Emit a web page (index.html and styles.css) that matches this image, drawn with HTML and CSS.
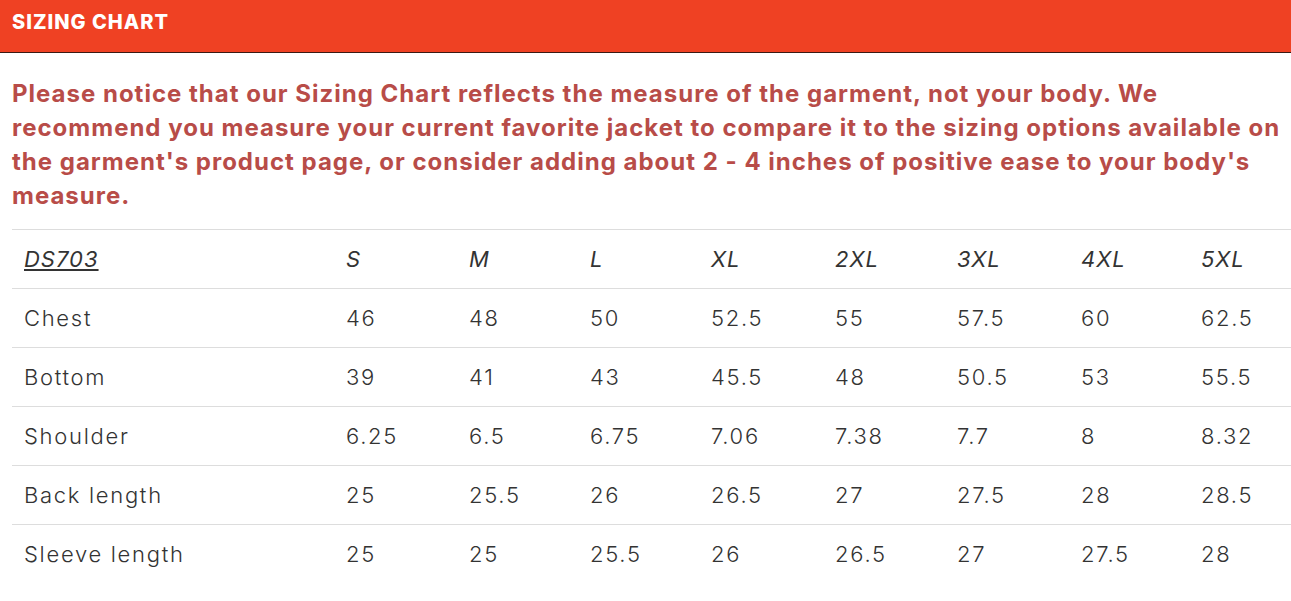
FILE: index.html
```html
<!DOCTYPE html>
<html lang="en">
<head>
<meta charset="utf-8">
<title>Sizing Chart</title>
<link rel="stylesheet" href="styles.css">
</head>
<body>
<header class="bar">
  <h2 class="bar-title">SIZING CHART</h2>
</header>
<main class="content">
  <p class="note">Please notice that our Sizing Chart reflects the measure of the garment, not your body. We recommend you measure your current favorite jacket to compare it to the sizing options available on the garment's product page, or consider adding about 2 - 4 inches of positive ease to your body's measure.</p>
  <table class="chart">
    <colgroup>
      <col class="c-label">
      <col class="c-s"><col class="c-m"><col class="c-l"><col class="c-xl">
      <col class="c-2xl"><col class="c-3xl"><col class="c-4xl"><col class="c-5xl">
    </colgroup>
    <thead>
      <tr>
        <th><u>DS703</u></th>
        <th>S</th><th>M</th><th>L</th><th>XL</th><th>2XL</th><th>3XL</th><th>4XL</th><th>5XL</th>
      </tr>
    </thead>
    <tbody>
      <tr><td>Chest</td><td>46</td><td>48</td><td>50</td><td>52.5</td><td>55</td><td>57.5</td><td>60</td><td>62.5</td></tr>
      <tr><td>Bottom</td><td>39</td><td>41</td><td>43</td><td>45.5</td><td>48</td><td>50.5</td><td>53</td><td>55.5</td></tr>
      <tr><td>Shoulder</td><td>6.25</td><td>6.5</td><td>6.75</td><td>7.06</td><td>7.38</td><td>7.7</td><td>8</td><td>8.32</td></tr>
      <tr><td>Back length</td><td>25</td><td>25.5</td><td>26</td><td>26.5</td><td>27</td><td>27.5</td><td>28</td><td>28.5</td></tr>
      <tr><td>Sleeve length</td><td>25</td><td>25</td><td>25.5</td><td>26</td><td>26.5</td><td>27</td><td>27.5</td><td>28</td></tr>
    </tbody>
  </table>
</main>
</body>
</html>
```
FILE: styles.css
```css
html, body {
  margin: 0;
  padding: 0;
  background: #ffffff;
  overflow: hidden;
}
body {
  font-family: "Inter", "DejaVu Sans", sans-serif;
  color: #333333;
}
.bar {
  background: #ef4123;
  height: 52px;
  border-bottom: 1px solid #3a1a14;
  display: flex;
  align-items: center;
  padding: 0 12px;
}
.bar-title {
  margin: 0;
  color: #ffffff;
  font-size: 20px;
  font-weight: 800;
  letter-spacing: 1px;
  padding-bottom: 8px;
}
.content {
  padding-left: 12px;
}
.note {
  margin: 24px 0 16px 0;
  color: #b84c48;
  font-size: 24px;
  line-height: 34px;
  font-weight: 700;
  letter-spacing: 1px;
}
.chart {
  width: 100%;
  border-collapse: collapse;
  table-layout: fixed;
  font-size: 22px;
  font-weight: 300;
  letter-spacing: 1.7px;
  color: #333333;
}
.c-label { width: 322px; }
.c-s { width: 123px; }
.c-m { width: 121px; }
.c-l { width: 121px; }
.c-xl { width: 124px; }
.c-2xl { width: 122px; }
.c-3xl { width: 124px; }
.c-4xl { width: 120px; }
.chart th,
.chart td {
  height: 58px;
  padding: 0 12px;
  text-align: left;
  vertical-align: middle;
  border-top: 1px solid #dddddd;
  white-space: nowrap;
}
.chart th {
  font-style: italic;
  font-weight: 400;
  letter-spacing: 1px;
}
```
